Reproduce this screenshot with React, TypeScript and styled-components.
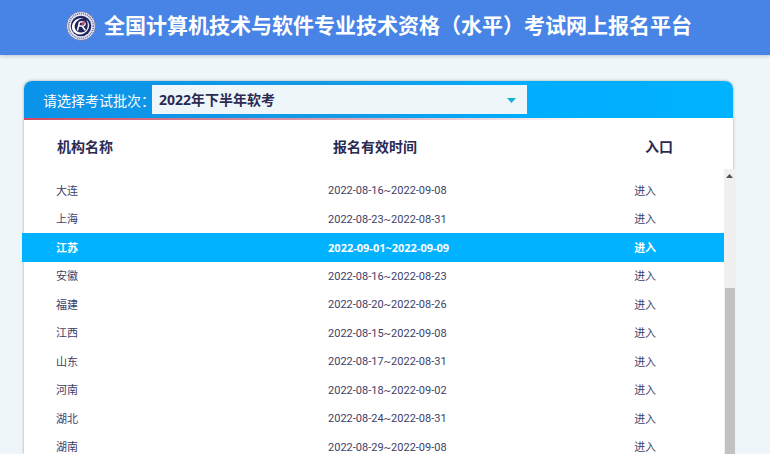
import React, { useState } from 'react';
import styled, { createGlobalStyle, css } from 'styled-components';

const GlobalStyle = createGlobalStyle`
  * { box-sizing: border-box; }
  body {
    margin: 0;
    background: #eef6f9;
    color: #2b2a52;
    font-family: 'Open Sans', 'Noto Sans CJK SC', sans-serif;
  }
`;

const Page = styled.div`
  display: flex;
  flex-direction: column;
  height: 100vh;
  overflow: hidden;
`;

const Banner = styled.header`
  display: flex;
  flex: none;
  align-items: center;
  justify-content: center;
  gap: 8px;
  height: 55px;
  padding: 0 12px 4px 0;
  background: #4884e5;
  box-shadow: 0 1px 4px #b9c3cc;
`;

const Title = styled.h1`
  margin: 0;
  padding-bottom: 4px;
  color: #fff;
  font-size: 21px;
  line-height: 30px;
  font-weight: 700;
  font-family: 'Noto Sans CJK SC', sans-serif;
  white-space: nowrap;
`;

const Logo = styled.svg`
  flex: none;
  width: 30px;
  height: 30px;
`;

const Card = styled.main`
  display: flex;
  flex: 1;
  flex-direction: column;
  min-height: 0;
  margin: 26px 37px 0 24px;
  border-radius: 8px 8px 0 0;
  background: #fff;
  box-shadow: 0 0 3px #98a2a8;
`;

const BatchBar = styled.div`
  display: flex;
  flex: none;
  align-items: center;
  height: 37px;
  padding-left: 19px;
  border-radius: 8px 8px 0 0;
  background: linear-gradient(90deg, #0a93ea 0%, #149be6 45%, #00aeff 72%, #00b2ff 100%);
`;

const Accent = styled.div`
  flex: none;
  height: 2px;
  background: linear-gradient(90deg, #cf4a60, #dda0b4 45%, #fff 80%);
`;

const BatchLabel = styled.label`
  flex: none;
  width: 109px;
  color: #fff;
  font-size: 14px;
  line-height: 20px;
  font-family: 'Noto Sans CJK SC', sans-serif;
  font-weight: 400;
  white-space: nowrap;
`;

const SelectWrap = styled.div`
  position: relative;
  width: 54.4%;
`;

const BatchSelect = styled.select`
  display: block;
  width: 100%;
  height: 29px;
  padding: 0 32px 0 7px;
  border: 0;
  border-radius: 0;
  appearance: none;
  background: #eef6f9;
  color: #2b2a52;
  font: 700 14px 'Open Sans', 'Noto Sans CJK SC', sans-serif;
`;

const Caret = styled.svg`
  position: absolute;
  top: 13px;
  right: 11px;
  width: 9px;
  height: 5px;
  pointer-events: none;
`;

const HeadTable = styled.table`
  flex: none;
  width: 100%;
  table-layout: fixed;
  border-collapse: collapse;
`;

const HeadCell = styled.th<{ $width?: string }>`
  width: ${(p) => p.$width ?? 'auto'};
  height: 49px;
  padding: 4px 0 0;
  text-align: left;
  font-size: 14px;
  line-height: 20px;
  font-weight: 700;

  &:first-child { padding-left: 33px; }
`;

const Viewport = styled.section`
  display: grid;
  flex: 1;
  grid-template-columns: minmax(0, 1fr) 11px;
  min-height: 0;
  margin: 0 -2px;
  overflow: hidden;
`;

const RegionTable = styled.table`
  align-self: start;
  width: 100%;
  margin-top: 7px;
  color: #403e66;
  table-layout: fixed;
  border-collapse: collapse;
`;

const RegionRow = styled.tr<{ $active: boolean }>`
  height: 28px;
  &:nth-child(odd) { height: 29px; }

  ${(p) =>
    p.$active &&
    css`
      background: #00b2ff;
      color: #fff;
      font-weight: 700;
    `}
`;

const RegionCell = styled.td<{ $width?: string }>`
  width: ${(p) => p.$width ?? 'auto'};
  padding: 0;
  font-size: 11px;
  line-height: 16px;

  &:first-child { padding-left: 34px; }
`;

const DateText = styled.span<{ $active: boolean }>`
  font-family: ${(p) => (p.$active ? "'Open Sans', sans-serif" : 'Roboto, sans-serif')};
`;

const EntryLink = styled.a`
  color: inherit;
  text-decoration: none;
`;

const ScrollTrack = styled.div`
  display: flex;
  flex-direction: column;
  align-items: center;
  background: #f0f0f0;
`;

const ScrollArrow = styled.svg`
  flex: none;
  width: 7px;
  height: 4px;
  margin: 5px 0 110px;
`;

const ScrollThumb = styled.div`
  flex: 1;
  align-self: stretch;
  margin-left: 1px;
  background: #c1c1c1;
`;

const regions = [
  ['大连', '2022-08-16~2022-09-08'],
  ['上海', '2022-08-23~2022-08-31'],
  ['江苏', '2022-09-01~2022-09-09'],
  ['安徽', '2022-08-16~2022-08-23'],
  ['福建', '2022-08-20~2022-08-26'],
  ['江西', '2022-08-15~2022-09-08'],
  ['山东', '2022-08-17~2022-08-31'],
  ['河南', '2022-08-18~2022-09-02'],
  ['湖北', '2022-08-24~2022-08-31'],
  ['湖南', '2022-08-29~2022-09-08'],
];

function Emblem() {
  return (
    <Logo viewBox="0 0 30 30" aria-hidden="true">
      <circle cx="15" cy="15" r="14.5" fill="#e6e8f6" stroke="#5d6aa8" strokeWidth="0.8" />
      <circle cx="15" cy="15" r="12.4" fill="none" stroke="#7378a0" strokeWidth="1.6" strokeDasharray="1.1 0.9" />
      <circle cx="15" cy="15" r="10.3" fill="#20245c" />
      <path d="M6.500 19C4 12 10 6 18 7C11.500 8 7.500 12.500 9 17.500C10.500 22 17 23 22 18.500C18 25 9.500 25 6.500 19Z" fill="#fff" />
      <path d="M20 8.500C25 12 24 19 18.500 21.500C22 18 23 12.500 20 8.500Z" fill="#dfe4f7" />
      <path d="M13.500 11L11.500 19.500M13.500 11H17C20 11 19.500 15 16.500 15H13M16 15L19.500 19.500" fill="none" stroke="#fff" strokeWidth="1.5" />
      <path d="M16 11H19L18 14.500H15.500Z" fill="#c44a66" />
    </Logo>
  );
}

export default function App() {
  const [selected, setSelected] = useState('江苏');

  return (
    <Page>
      <GlobalStyle />
      <Banner>
        <Emblem />
        <Title>全国计算机技术与软件专业技术资格（水平）考试网上报名平台</Title>
      </Banner>
      <Card>
        <BatchBar>
          <BatchLabel htmlFor="batch">请选择考试批次：</BatchLabel>
          <SelectWrap>
            <BatchSelect id="batch">
              <option>2022年下半年软考</option>
            </BatchSelect>
            <Caret viewBox="0 0 9 5" aria-hidden="true">
              <path d="M0 0H9L4.500 5Z" fill="#14aed8" />
            </Caret>
          </SelectWrap>
        </BatchBar>
        <Accent />
        <HeadTable>
          <thead>
            <tr>
              <HeadCell $width="43.6%">机构名称</HeadCell>
              <HeadCell $width="44%">报名有效时间</HeadCell>
              <HeadCell>入口</HeadCell>
            </tr>
          </thead>
        </HeadTable>
        <Viewport>
          <RegionTable>
            <tbody>
              {regions.map(([name, period]) => (
                <RegionRow key={name} $active={name === selected} onMouseEnter={() => setSelected(name)}>
                  <RegionCell $width="43.6%">{name}</RegionCell>
                  <RegionCell $width="43.6%">
                    <DateText $active={name === selected}>{period}</DateText>
                  </RegionCell>
                  <RegionCell>
                    <EntryLink href="#enter">进入</EntryLink>
                  </RegionCell>
                </RegionRow>
              ))}
            </tbody>
          </RegionTable>
          <ScrollTrack>
            <ScrollArrow viewBox="0 0 7 4" aria-hidden="true">
              <path d="M0 4L3.500 0L7 4Z" fill="#505050" />
            </ScrollArrow>
            <ScrollThumb />
          </ScrollTrack>
        </Viewport>
      </Card>
    </Page>
  );
}
